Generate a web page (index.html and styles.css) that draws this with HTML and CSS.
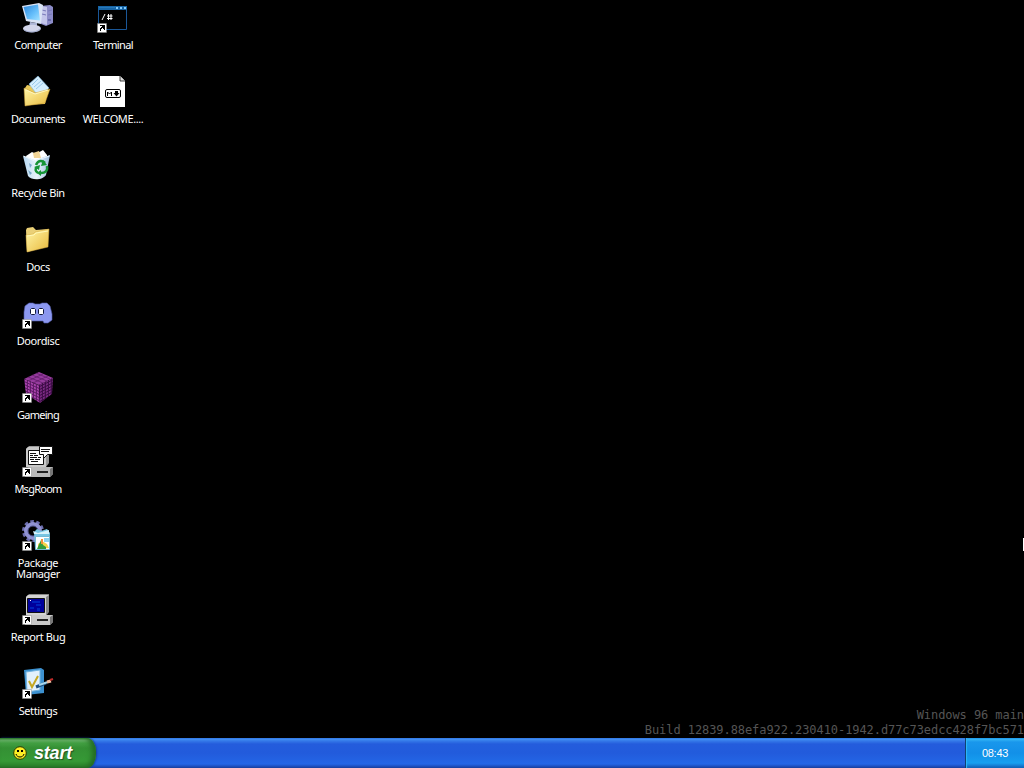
FILE: index.html
```html
<!DOCTYPE html>
<html lang="en">
<head>
<meta charset="utf-8">
<title>Windows 96</title>
<link rel="stylesheet" href="styles.css">
</head>
<body>
<svg class="defs" width="0" height="0" aria-hidden="true">
  <defs>
    <linearGradient id="folder" x1="0" y1="0" x2="1" y2="1"><stop offset="0" stop-color="#fff6a8"/><stop offset="1" stop-color="#e8b93c"/></linearGradient>
    <linearGradient id="screen" x1="0" y1="0" x2="1" y2="1"><stop offset="0" stop-color="#2c86dc"/><stop offset=".6" stop-color="#68c0fb"/><stop offset="1" stop-color="#a5e2ff"/></linearGradient>
    <linearGradient id="bin" x1="0" y1="0" x2="1" y2="0"><stop offset="0" stop-color="#b7d9f3"/><stop offset=".5" stop-color="#e8f3fb"/><stop offset="1" stop-color="#a0bfe0"/></linearGradient>
    <pattern id="weave-left" width="3" height="3" patternUnits="userSpaceOnUse" patternTransform="skewY(25)"><path fill="#5b1964" d="M0 0h3v3H0z"/><path fill="#ab45ae" d="M0 0h2v2H0z"/></pattern>
    <pattern id="weave-right" width="3" height="3" patternUnits="userSpaceOnUse" patternTransform="skewY(-27)"><path fill="#3c0c45" d="M0 0h3v3H0z"/><path fill="#7b2a82" d="M0 0h2v2H0z"/></pattern>
    <g id="shortcut">
      <path fill="#fff" stroke="#888" stroke-width=".5" d="M.5 21.500h9v9h-9z"/>
      <path d="M3 23h5v5H7v-1H6v-1H5v1H4v2H3v-2h0v-1h1v-1h1v-1H3z"/>
    </g>
  </defs>
</svg>
<main class="desktop">
  <div class="item">
    <svg class="icon" viewBox="0 0 32 32">
      <path fill="#8c8cc8" d="M19 4l9-1 3 2v16l-7 3-5-2z"/><path fill="#c3c5ea" d="M19 4l6 1v18l-6-2z"/>
      <path stroke="#7779b8" d="M20 8l4 1M20 12l4 1M26 9l4-1M26 13l4-1"/><path fill="#676baa" d="M26 17h3v2h-3z"/>
      <path fill="#d9e3f5" d="M0 4l17-3 4 2-2 19-15-3z"/><path fill="url(#screen)" d="M1.500 5L16 2.500l2 16L5 17z"/>
      <path fill="#acb5d5" d="M8 20l7 1v4H7z"/><ellipse cx="10" cy="26.500" rx="9" ry="3.800" fill="#d2d5ea"/><path fill="none" stroke="#9ca7ca" d="M2 28c5 3 13 3 17-2"/>
    </svg>
    <span class="label tight">Computer</span>
  </div>
  <div class="item">
    <svg class="icon" viewBox="0 0 32 32">
      <path fill="#e8c859" d="M3 12l2-3 5 1 3 3 13-2-3 17-19 1z"/><path fill="#d5eefd" stroke="#82b8dd" stroke-width=".6" d="M7 8l9-8 11 12-10 9z"/>
      <path stroke="#6dacd9" stroke-width=".6" d="M10 9l6-6M12 11l7-6M14 13l7-6"/>
      <path fill="url(#folder)" stroke="#c89b32" stroke-width=".5" d="M2 12l11 5 15-4-5 14-20 3z"/><path fill="none" stroke="#fff7bd" d="M4 14l9 4 13-4"/>
    </svg>
    <span class="label tight">Documents</span>
  </div>
  <div class="item">
    <svg class="icon" viewBox="0 0 32 32">
      <path fill="#fff" d="M4 6l6-4 4 2 7-4 4 5v6L5 11z"/><path fill="#f1d496" d="M11 3l6-2 2 7h-7z"/><path fill="url(#bin)" d="M1 6l12 4 15-5-4 20c-3 5-14 6-18 1z"/>
      <path fill="none" stroke="#edf8ff" d="M1.500 6l11 5 15-5"/><path fill="#78a9cb" d="M7 13l3 2-2 3zM6 20l4 3-2 2z"/>
      <path fill="none" stroke="#159436" stroke-width="2.500" d="M14 15c2-5 6-5 9-2M25 16c1 5-2 7-6 7M16 23c-3-2-3-4-1-6"/><path fill="#159436" d="M21 10l4 5-6 1zM19 20v6l-4-3zM12 17l6-2-1 5z"/>
    </svg>
    <span class="label">Recycle Bin</span>
  </div>
  <div class="item">
    <svg class="icon" viewBox="0 0 32 32"><path fill="#ead077" d="M4 6l1-2 6-1 3 3 12-1v17L5 28z"/><path fill="url(#folder)" stroke="#d5aa42" stroke-width=".5" d="M4 11l7-1 2-2 14-3-1 18L5 28z"/><path fill="none" stroke="#fff8b6" d="M5 12l7-1 2-2 12-2"/></svg>
    <span class="label">Docs</span>
  </div>
  <div class="item">
    <svg class="icon" viewBox="0 0 32 32"><path fill="#8c98f0" stroke="#525da7" stroke-width=".6" d="M3 8l4-3h4l2 1h5l2-1h5l3 3 2 8v6l-4 3h-4l-1-2H10l-5 1-3-2V14z"/><path fill="#fff" stroke="#111a40" d="M9.500 12.500h3l1 1v4l-1 1h-3l-1-1v-4zM17.500 12.500h3l1 1v4l-1 1h-3l-1-1v-4z" transform="translate(0 -2)"/><use href="#shortcut"/></svg>
    <span class="label">Doordisc</span>
  </div>
  <div class="item">
    <svg class="icon" viewBox="0 0 32 32"><path fill="#963b9d" d="M2 7l15-7 14 6-14 7z"/><path fill="url(#weave-left)" d="M2 7l15 6 1 18L4 22z"/><path fill="url(#weave-right)" d="M17 13l14-7-1 16-12 9z"/><path stroke="#5b1964" stroke-width=".7" d="M6 5l15 6M10 3l15 6M14 1l14 6M6 9l15-7M11 11l15-7"/><use href="#shortcut"/></svg>
    <span class="label tighter">Gameing</span>
  </div>
  <div class="item">
    <svg class="icon" viewBox="0 0 32 32"><path fill="#999" d="M4 3l3-3h20v17l-3 4H4z"/><path fill="#c9c9c9" d="M4 3l2-2h18v20H4z"/><path fill="#fff" stroke="#111" d="M6.500 4.500h15v14h-15z"/><path stroke="#111" d="M8 7.500h6M8 9.500h3M12 9.500h4M8 11.500h7M16 11.500h3M8 13.500h4M13 13.500h5M9 15.500h7"/><path fill="#b9b9b9" d="M3 23l4-2h24v7l-3 3H3z"/><path fill="#777" d="M28 23l3-2v7l-3 3z"/><path stroke="#222" stroke-width="2" d="M15 26h11"/><path fill="#fff" stroke="#111" d="M17.500.500h13v8h-5l-4 4v-4h-4z"/><path stroke="#111" d="M19 3.500h9M19 5.500h8"/><use href="#shortcut"/></svg>
    <span class="label tighter">MsgRoom</span>
  </div>
  <div class="item">
    <svg class="icon" viewBox="0 0 32 32"><circle cx="11" cy="11" r="9.500" fill="none" stroke="#6d6eae" stroke-width="3" stroke-dasharray="3.500 2.470"/><circle cx="11" cy="11" r="7" fill="none" stroke="#8f91d2" stroke-width="4"/><circle cx="11" cy="11" r="5" fill="none" stroke="#4d5189"/><path fill="#78c5e3" d="M12 12l3-3 4 2 6-2 3 4-1 16H13z"/><path fill="#d8f3fc" d="M11 11l5 2 11-3v4H12z"/><path fill="#fff" stroke="#75b9d3" d="M13.500 16.500h14v13h-14z"/><path fill="#f1d54b" d="M16 24l4-3 5 3 2 4-11 1z"/><path fill="#329b3a" d="M15 29l4-9 2 5 3 2v2z"/><path fill="#f08f3b" d="M19 19h2v5h-2z"/><path fill="#8fd3ef" d="M22 18h5v4h-5z"/><use href="#shortcut"/></svg>
    <span class="label">Package<br>Manager</span>
  </div>
  <div class="item">
    <svg class="icon" viewBox="0 0 32 32"><path fill="#888" d="M4 3l3-3h20v18l-3 4H4z"/><path fill="#d2d2d2" d="M4 3l2-2h21l-3 2v18H4z"/><path fill="#00009b" stroke="#111" d="M5.500 4.500h17v14h-17z"/><path fill="#0022bd" d="M10 7h8v2h-8zM14 10h5v2h-5zM8 13h4v2H8zM15 14h3v3h-3z"/><path stroke="#fff" d="M8 6.500h1"/><path fill="#c8c8c8" d="M3 23l4-2h24v7l-3 3H3z"/><path fill="#777" d="M28 23l3-2v7l-3 3z"/><path stroke="#222" stroke-width="2" d="M15 26h11"/><use href="#shortcut"/></svg>
    <span class="label">Report Bug</span>
  </div>
  <div class="item">
    <svg class="icon" viewBox="0 0 32 32"><path fill="#3c91d0" d="M2 2l17-2 3 2v23L4 27z"/><path fill="#e2f0fb" stroke="#73b4df" d="M4 4l14-2v20L5 24z"/><path fill="none" stroke="#c5a722" stroke-width="2" d="M7 13l3 6 6-11"/><path stroke="#1e4f80" stroke-width="3" d="M14 19l10-4"/><path stroke="#a6d7ed" stroke-width="2" d="M17 17l9-3"/><path stroke="#f1ba9c" stroke-width="3" d="M25 14l4-1"/><path stroke="#c12c2a" stroke-width="2" d="M28 12l3-1"/><use href="#shortcut"/></svg>
    <span class="label">Settings</span>
  </div>
  <div class="item">
    <svg class="icon" viewBox="0 0 32 32"><path fill="#000" stroke="#1a5798" d="M1.500 4.500h28v23h-28z"/><path fill="#1764a5" d="M1 4h29v4H1z"/><path fill="#81c9fa" d="M19 5h2v2h-2zM23 5h2v2h-2zM27 5h2v2h-2z"/><path stroke="#2777b7" d="M2 5.500h16"/><path fill="none" stroke="#fff" d="M5 18l3-6M11.500 12v6M14 12v6M10 14h5.500M10 16.500h5.500"/><use href="#shortcut"/></svg>
    <span class="label tight">Terminal</span>
  </div>
  <div class="item">
    <svg class="icon" viewBox="0 0 32 32"><path fill="#fff" d="M3 0h20l5 5v26H3z"/><path fill="#ddd" stroke="#111" stroke-width=".8" d="M23 0v5h5"/><rect x="8.500" y="13.500" width="15" height="8" rx="1.500" fill="#fff" stroke="#000"/><path fill="none" stroke="#000" d="M10.500 20v-4l2 2 2-2v4"/><path d="M18 15h3v2h1.500l-3 3.500-3-3.500H18z"/></svg>
    <span class="label">WELCOME....</span>
  </div>
  <p class="build">Windows 96 main<br>Build 12839.88efa922.230410-1942.d77c73edcc428f7bc571</p>
  <span class="pointer"></span>
</main>
<footer class="taskbar">
  <button class="start"><svg class="smile" viewBox="0 0 14 14"><circle cx="7" cy="7" r="6.300" fill="#ffef25" stroke="#2a3900"/><path d="M4 4h2v2H4zM8 4h2v2H8z"/><path fill="none" stroke="#000" d="M3 8c1 4 7 4 8 0"/></svg><span>start</span></button>
  <div class="clock">08:43</div>
</footer>
</body>
</html>
```
FILE: styles.css
```css
body {
  margin: 0;
  width: 1024px;
  height: 768px;
  overflow: hidden;
  display: flex;
  flex-direction: column;
  background: #000;
  font-family: "Noto Sans", "DejaVu Sans", sans-serif;
}
.defs { position: absolute; }
.desktop {
  position: relative;
  height: 738px;
  display: grid;
  grid-template-rows: repeat(10, 74px);
  grid-auto-columns: 75px;
  grid-auto-flow: column;
  justify-content: start;
}
.item { display: flex; flex-direction: column; padding-top: 2px; }
.icon { width: 32px; height: 32px; margin-left: 22px; flex: none; }
.label {
  margin-top: 5px;
  padding-left: 1px;
  color: #fff;
  font-size: 11px;
  line-height: 11px;
  letter-spacing: -0.4px;
  text-align: center;
  white-space: nowrap;
}
.tight { letter-spacing: -0.6px; }
.tighter { letter-spacing: -0.75px; }
.build {
  position: absolute;
  right: 0;
  bottom: 0;
  margin: 0;
  color: #555;
  font: 12px/15px "DejaVu Sans Mono", monospace;
  letter-spacing: -0.07px;
  text-align: right;
}
.pointer {
  position: absolute;
  right: 0;
  top: 538px;
  width: 1px;
  height: 13px;
  background: #fff;
}
.taskbar {
  height: 30px;
  display: flex;
  justify-content: space-between;
  background: linear-gradient(#286bdc 0, #4390f4 1px, #3478e8 3px, #245cdc 6px, #225bdc 15px, #2466e6 26px, #1e52c5 28px, #173e9c 30px);
}
.start {
  width: 96px;
  height: 30px;
  padding: 0 0 0 13px;
  border: 0;
  border-radius: 0 9px 9px 0 / 0 14px 14px 0;
  display: flex;
  align-items: center;
  gap: 7px;
  color: #fff;
  background: linear-gradient(#2c7c2c 0, #70b870 2px, #43a043 5px, #349034 10px, #369936 23px, #2c852c 28px, #246b24 30px);
  box-shadow: inset -4px 0 5px #246c24, 1px 0 2px #153f99;
  font: italic bold 18px/30px "Liberation Sans", Arial, sans-serif;
  letter-spacing: -0.2px;
  text-shadow: 1px 1px 1px #244f24;
}
.smile { width: 14px; height: 14px; flex: none; }
.clock {
  box-sizing: border-box;
  width: 59px;
  border-left: 1px solid #104172;
  color: #fff;
  background: linear-gradient(#1185e1 0, #35b6f5 1px, #1997ec 4px, #1290e8 15px, #16a0f0 25px, #1478cf 28px, #095bac 30px);
  box-shadow: inset 1px 0 1px #30b8fa;
  font: 11px/30px "Liberation Sans", Arial, sans-serif;
  letter-spacing: -0.3px;
  text-align: center;
}
```
